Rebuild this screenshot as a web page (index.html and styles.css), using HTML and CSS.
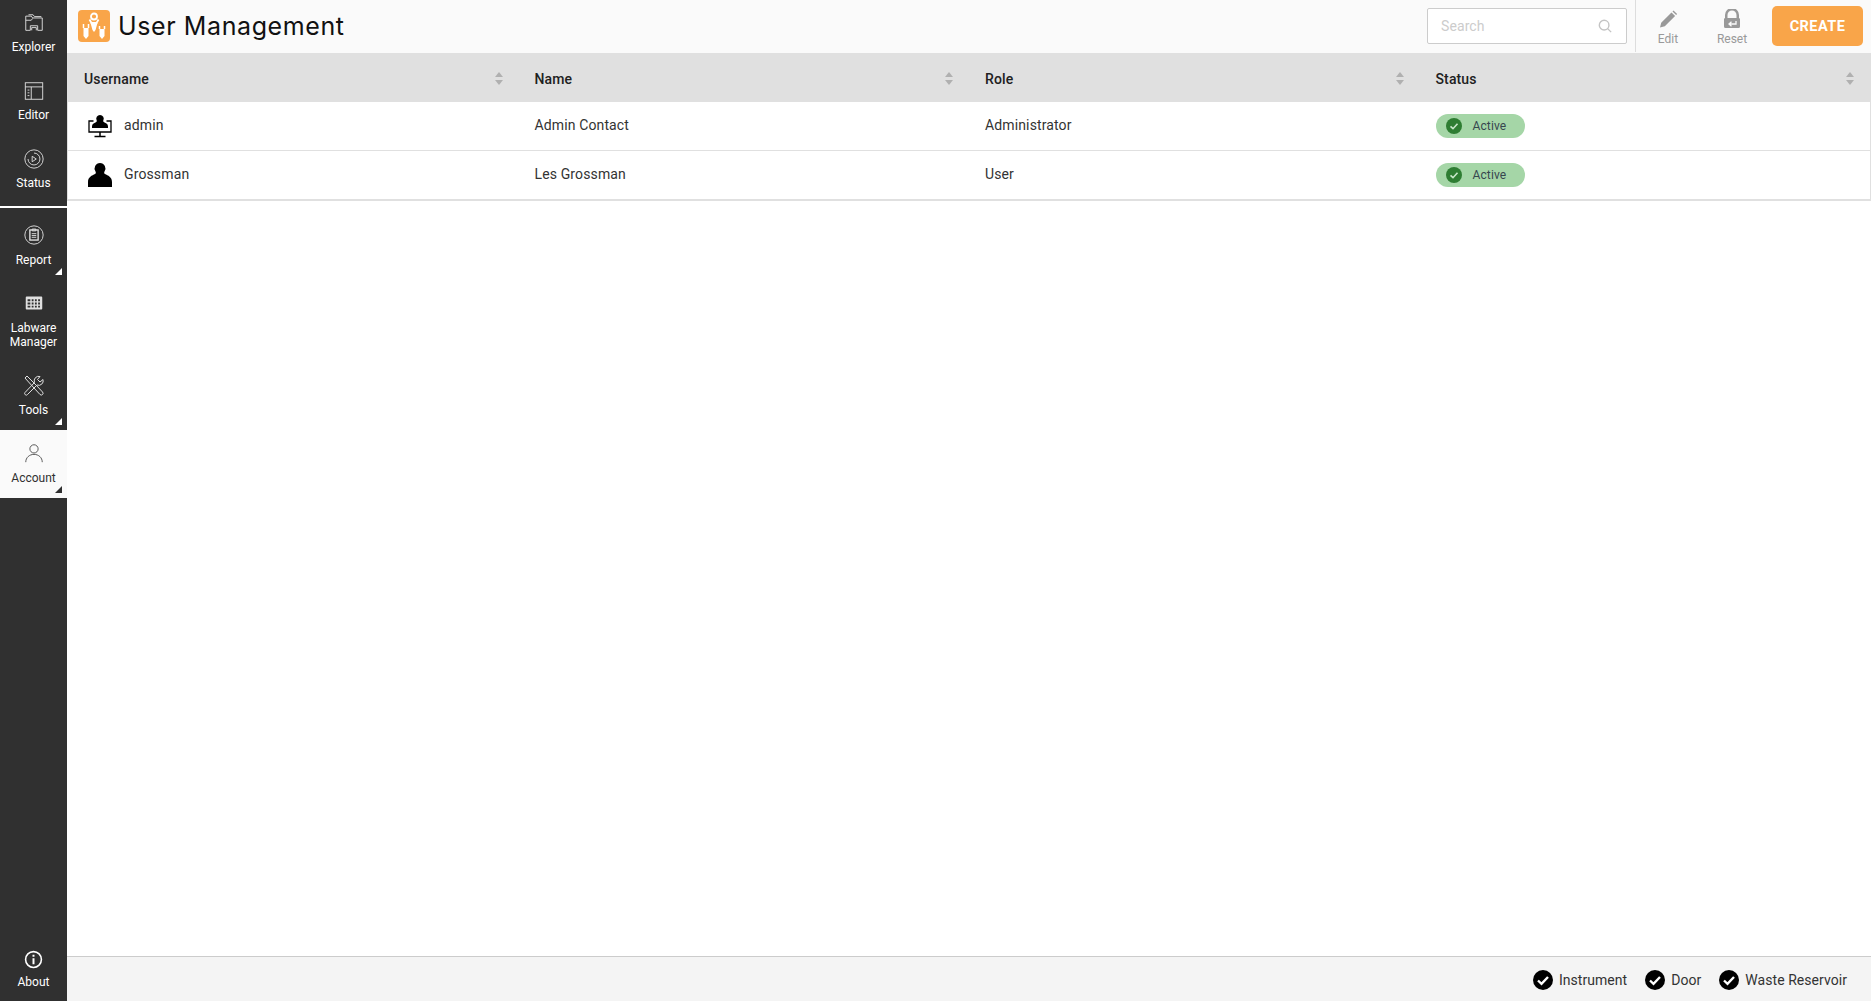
FILE: index.html
```html
<!DOCTYPE html>
<html lang="en">
<head>
<meta charset="utf-8">
<title>User Management</title>
<link rel="stylesheet" href="styles.css">
</head>
<body>
<div class="app">
  <nav class="sidebar">
    <div class="nav-group nav-top">
      <a class="nav-item">
        <svg class="nav-icon" viewBox="0 0 24 24" fill="none" stroke="currentColor" stroke-width="1"><path d="M3 20V4.500h6l1.500 2H21V20M3 9h6l1.500-2M6 3h5l1.500 2H20"/><path d="M3 20h5v-5h8v5h5M9.500 20v-3h5v3"/></svg>
        <span>Explorer</span>
      </a>
      <a class="nav-item">
        <svg class="nav-icon" viewBox="0 0 24 24" fill="none" stroke="currentColor" stroke-width="1"><rect x="2.500" y="3" width="19" height="18"/><path d="M2.500 7.500h19M9 7.500V21M5 11h2M5 14h2M5 17h2"/></svg>
        <span>Editor</span>
      </a>
      <a class="nav-item">
        <svg class="nav-icon" viewBox="0 0 24 24" fill="none" stroke="currentColor" stroke-width="1"><circle cx="12" cy="12" r="10"/><path d="M12 5.500a6.500 6.500 0 1 1-6.500 6.500"/><path d="M10 9l4.500 3-4.500 3z"/></svg>
        <span>Status</span>
      </a>
    </div>
    <div class="nav-group nav-lower">
      <a class="nav-item has-menu">
        <svg class="nav-icon" viewBox="0 0 24 24" fill="none" stroke="currentColor" stroke-width="1"><circle cx="12" cy="12" r="10"/><rect x="7.500" y="6.500" width="9" height="11" stroke-width="1.500"/><path d="M10 5.500h4v2h-4zM9.500 10.500h5M9.500 12.500h5M9.500 14.500h5"/></svg>
        <span>Report</span>
      </a>
      <a class="nav-item tall">
        <svg class="nav-icon" viewBox="0 0 24 24"><path fill="currentColor" fill-rule="evenodd" d="M4 5h16a1 1 0 0 1 1 1v12a1 1 0 0 1-1 1H4a1 1 0 0 1-1-1V6a1 1 0 0 1 1-1zm1 3v2h3V8zm4.500 0v2h2V8zm3.500 0v2h2V8zm3.500 0v2h2V8zM5 11.500v2h3v-2zm4.500 0v2h2v-2zm3.500 0v2h2v-2zm3.500 0v2h2v-2zM5 15v2h3v-2zm4.500 0v2h2v-2zm3.500 0v2h2v-2zm3.500 0v2h2v-2z"/></svg>
        <span>Labware<br>Manager</span>
      </a>
      <a class="nav-item has-menu tools">
        <svg class="nav-icon" viewBox="0 0 24 24" fill="none" stroke="currentColor" stroke-width="1"><path d="M3 5l2-2 9.500 9.500 6 6.500a1.500 1.500 0 0 1-2.500 2.500l-6-6.500z"/><path d="M21 6.500l-3 2.500-2.500-2.500 2.500-3a4.500 4.500 0 0 0-5.500 6l-9.500 10a1.500 1.500 0 0 0 2.500 2l9.500-9.500a4.500 4.500 0 0 0 6-5.500z"/></svg>
        <span>Tools</span>
      </a>
      <a class="nav-item has-menu active">
        <svg class="nav-icon" viewBox="0 0 24 24" fill="none" stroke="currentColor" stroke-width="1"><circle cx="12" cy="7.500" r="4.500"/><path d="M3 22c0-5 4-8.500 9-8.500s9 3.500 9 8.500"/></svg>
        <span>Account</span>
      </a>
    </div>
    <div class="nav-spacer"></div>
    <a class="nav-item about">
      <svg class="nav-icon about-icon" viewBox="0 0 24 24" fill="none" stroke="currentColor" stroke-width="2"><circle cx="12" cy="12" r="10"/><path d="M12 10.500V18M12 6v2.500" stroke-width="2.500"/></svg>
      <span>About</span>
    </a>
  </nav>

  <div class="main">
    <header class="topbar">
      <div class="logo">
        <svg viewBox="0 0 32 32" width="32" height="32"><rect width="32" height="32" rx="4" fill="#f9a549"/><circle cx="16" cy="6.500" r="3" fill="none" stroke="#fff" stroke-width="1.800"/><path d="M11.500 9.500l2 3.500h5l2-3.500" fill="none" stroke="#fff" stroke-width="1.800"/><path d="M12.500 13h7l-2 7-1.500 2-1.500-2z" fill="#fff"/><path d="M5.500 14v4M10.500 14v4M21.500 16v3M26.500 16v3" stroke="#fff" stroke-width="1.500"/><path d="M5.500 18h5v8l-2.500 3-2.500-3zM21.500 19h5v7l-2.500 3-2.500-3z" fill="#fff"/></svg>
      </div>
      <h1 class="title">User Management</h1>
      <div class="search">
        <span class="search-text">Search</span>
        <svg viewBox="0 0 16 16" width="14" height="14" fill="none" stroke="#c4c4c4" stroke-width="1.600"><circle cx="7" cy="7" r="5.500"/><path d="M11 11l4 4"/></svg>
      </div>
      <div class="actions">
        <div class="action action-edit">
          <svg viewBox="0 0 20 20" width="20" height="20" fill="#999"><path d="M2 18.500l1.200-4.800L13.500 3.400l3.600 3.600L6.800 17.300zM14.500 2.400l1-1 3.600 3.600-1 1z"/></svg>
          <span>Edit</span>
        </div>
        <div class="action action-reset">
          <svg viewBox="0 0 20 20" width="20" height="20"><path fill="#999" fill-rule="evenodd" d="M3 9V6a7 7 0 0 1 14 0v3a1.500 1.500 0 0 1 1 1.500v7a1.500 1.500 0 0 1-1.500 1.500h-13A1.500 1.500 0 0 1 2 17.500v-7A1.500 1.500 0 0 1 3 9zm2.500 0h9V6a4.500 4.500 0 0 0-9 0z"/><path d="M14 12v3H7.500M9.500 12.800L7 15l2.500 2.200" fill="none" stroke="#fafafa" stroke-width="1.300"/></svg>
          <span>Reset</span>
        </div>
        <button class="create">CREATE</button>
      </div>
    </header>

    <section class="content">
      <div class="table">
        <div class="row head">
          <div class="cell">Username<i class="sort"></i></div>
          <div class="cell">Name<i class="sort"></i></div>
          <div class="cell">Role<i class="sort"></i></div>
          <div class="cell">Status<i class="sort"></i></div>
        </div>
        <div class="row">
          <div class="cell user">
            <svg viewBox="0 0 24 24" width="24" height="24"><path d="M12 1a3.800 3.800 0 0 1 3.300 5.600c-.3.700 0 1.200.8 1.600 2 .8 3.900 1.600 3.900 4.300v1.500H4v-1.500c0-2.700 1.900-3.500 3.900-4.300.8-.4 1.100-.9.800-1.600A3.800 3.800 0 0 1 12 1z"/><path d="M5.500 7H1v11h22V7h-4.500" fill="none" stroke="#000" stroke-width="1.300"/><path d="M12 18v4M6.500 22.500h11" stroke="#000" stroke-width="1.500"/></svg>
            <span>admin</span>
          </div>
          <div class="cell">Admin Contact</div>
          <div class="cell">Administrator</div>
          <div class="cell"><span class="badge"><svg viewBox="0 0 16 16" width="16" height="16"><circle cx="8" cy="8" r="8" fill="#2e7d32"/><path d="M4.500 8.300l2.500 2.400 4.500-5" fill="none" stroke="#c8e6c9" stroke-width="1.600"/></svg><span>Active</span></span></div>
        </div>
        <div class="row">
          <div class="cell user">
            <svg viewBox="0 0 24 24" width="24" height="24"><path d="M12 0a5.500 5.500 0 0 1 4.500 8.600c-.5.900-.5 1.900.4 2.400C20 12.500 24 14 24 19v5H0v-5c0-5 4-6.500 7.100-8 .9-.5.900-1.500.4-2.400A5.500 5.500 0 0 1 12 0z"/></svg>
            <span>Grossman</span>
          </div>
          <div class="cell">Les Grossman</div>
          <div class="cell">User</div>
          <div class="cell"><span class="badge"><svg viewBox="0 0 16 16" width="16" height="16"><circle cx="8" cy="8" r="8" fill="#2e7d32"/><path d="M4.500 8.300l2.500 2.400 4.500-5" fill="none" stroke="#c8e6c9" stroke-width="1.600"/></svg><span>Active</span></span></div>
        </div>
      </div>
    </section>

    <footer class="footer">
      <div class="state"><svg viewBox="0 0 20 20" width="20" height="20"><circle cx="10" cy="10" r="10"/><path d="M5 10.500l3.500 3.300L15 7" fill="none" stroke="#fff" stroke-width="2.400"/></svg><span>Instrument</span></div>
      <div class="state"><svg viewBox="0 0 20 20" width="20" height="20"><circle cx="10" cy="10" r="10"/><path d="M5 10.500l3.500 3.300L15 7" fill="none" stroke="#fff" stroke-width="2.400"/></svg><span>Door</span></div>
      <div class="state"><svg viewBox="0 0 20 20" width="20" height="20"><circle cx="10" cy="10" r="10"/><path d="M5 10.500l3.500 3.300L15 7" fill="none" stroke="#fff" stroke-width="2.400"/></svg><span>Waste Reservoir</span></div>
    </footer>
  </div>
</div>
</body>
</html>
```
FILE: styles.css
```css
* { box-sizing: border-box; }
html, body { margin: 0; height: 100%; }
body { font-family: Roboto, "Liberation Sans", sans-serif; color: #212121; background: #fff; overflow: hidden; }
.app { display: flex; height: 1001px; }

.sidebar { width: 67px; flex: none; background: #303030; color: #fff; display: flex; flex-direction: column; }
.nav-group { display: flex; flex-direction: column; flex: none; }
.nav-top { border-bottom: 2px solid #fff; height: 208px; }
.nav-lower { padding-top: 4px; }
.nav-item { position: relative; height: 68px; display: flex; flex-direction: column; align-items: center; padding-top: 12px; font-size: 12px; line-height: 14px; text-align: center; flex: none; }
.nav-item span { margin-top: 6px; }
.nav-lower .nav-item span { margin-top: 7px; }
.nav-item.tall { height: 82px; }
.nav-icon { width: 22px; height: 22px; display: block; flex: none; opacity: .85; }
.nav-item.tools .nav-icon { width: 24px; height: 24px; margin-top: -1px; }
.nav-lower .nav-item.tools span { margin-top: 6px; }
.nav-item.has-menu::after { content: ""; position: absolute; right: 5px; bottom: 5px; border-style: solid; border-width: 0 0 7px 7px; border-color: transparent transparent #fff transparent; }
.nav-item.active { background: #fafafa; color: #303030; }
.nav-item.active::after { border-bottom-color: #303030; }
.nav-spacer { flex: 1; }
.about { height: 53px; padding-top: 2px; }
.about-icon { width: 19px; height: 19px; opacity: 1; }
.about span { margin-top: 6px; }

.main { flex: 1; min-width: 0; display: flex; flex-direction: column; }
.topbar { height: 53px; flex: none; background: #fafafa; display: flex; align-items: center; padding: 0 8px 1px 11px; }
.logo { width: 32px; height: 32px; flex: none; }
.logo svg { display: block; }
.title { margin: 0 0 0 8px; font-family: Inter, sans-serif; font-weight: 400; font-size: 25px; letter-spacing: .6px; color: #111; flex: 1; }
.search { width: 200px; height: 36px; background: #fff; border: 1px solid #ccc; border-radius: 2px; display: flex; align-items: center; justify-content: space-between; padding: 0 14px 0 13px; font-size: 14px; color: #ccc; letter-spacing: .1px; }
.actions { display: flex; align-items: center; height: 52px; margin-left: 8px; border-left: 1px solid #ddd; }
.action { width: 64px; display: flex; flex-direction: column; align-items: center; font-size: 12px; color: #999; line-height: 14px; padding-top: 2px; }
.action span { margin-top: 3px; }
.create { width: 91px; height: 40px; margin-left: 8px; border: 0; border-radius: 5px; background: #f9a549; color: #fff; font: 700 14.500px Roboto, sans-serif; letter-spacing: .45px; }

.content { flex: 1; min-height: 0; }
.table { border-right: 1px solid #e0e0e0; border-left: 1px solid #e0e0e0; border-bottom: 2px solid #e0e0e0; }
.row { display: grid; grid-template-columns: repeat(4, 1fr); height: 49px; align-items: center; font-size: 14px; border-bottom: 1px solid #e0e0e0; color: #333; letter-spacing: .13px; padding-bottom: 2px; }
.row:last-child { border-bottom: 0; height: 48px; padding-bottom: 2px; }
.head { height: 49px; background: #e0e0e0; border-bottom: 0; font-weight: 500; color: #212121; padding: 2px 0 0; }
.cell { position: relative; padding-left: 16px; display: flex; align-items: center; }
.sort { position: absolute; right: 15px; top: 50%; margin-top: -7px; width: 9px; height: 13px; }
.sort::before, .sort::after { content: ""; position: absolute; left: 0; border-left: 4.500px solid transparent; border-right: 4.500px solid transparent; }
.sort::before { top: 0; border-bottom: 5.500px solid #b0b0b0; }
.sort::after { bottom: 0; border-top: 5.500px solid #b0b0b0; }
.user svg { margin: 2px 12px 0 4px; flex: none; }
.badge { display: inline-flex; align-items: center; width: 89px; height: 24px; margin-top: 2px; border-radius: 12px; background: #a5d6a7; padding-left: 10px; font-size: 12px; color: #37474f; }
.badge span { margin-left: 11px; }

.footer { height: 45px; flex: none; background: #f4f4f4; border-top: 1px solid #ccc; display: flex; align-items: center; justify-content: flex-end; gap: 18px; padding-right: 24px; font-size: 14px; color: #333; letter-spacing: .05px; }
.state { display: flex; align-items: center; gap: 6px; margin-top: 2px; }
.state span { margin-top: -1px; }
```
